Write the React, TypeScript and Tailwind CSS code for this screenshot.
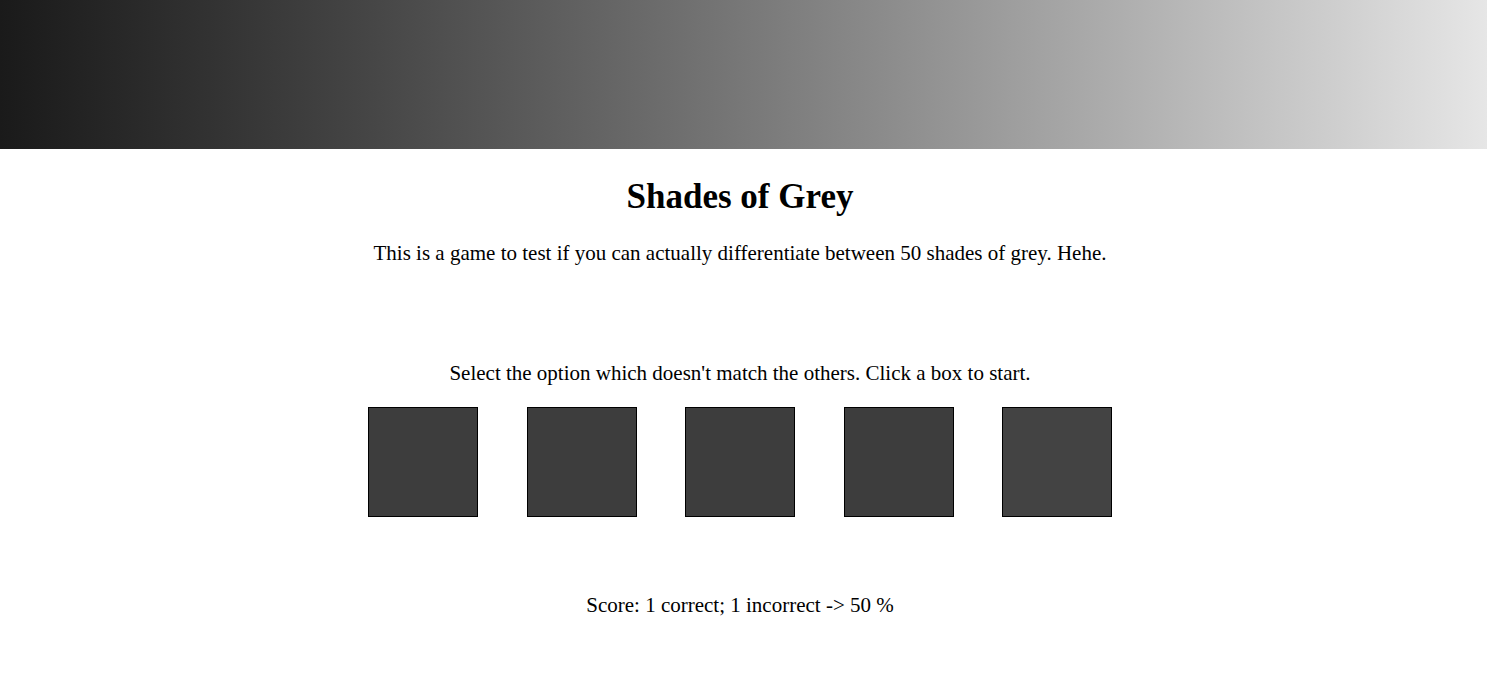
const shades = ["#3d3d3d", "#3d3d3d", "#3d3d3d", "#3d3d3d", "#434343"]

const App = () => {
    return (
        <div className="min-h-screen bg-white text-black" style={{ fontFamily: '"Liberation Serif", "Times New Roman", serif' }}>
            <header className="h-[149px] w-full bg-gradient-to-r from-[#1a1a1a] to-[#e6e6e6]" />

            <main className="flex flex-col items-center pr-[7px]">
                <h1 className="mt-[28px] text-[35px] font-bold leading-[normal]">Shades of Grey</h1>
                <p className="mt-[24px] text-[21px] leading-[normal]">
                    This is a game to test if you can actually differentiate between 50 shades of grey. Hehe.
                </p>

                <p className="mt-[95px] text-[21px] leading-[normal]">
                    Select the option which doesn't match the others. Click a box to start.
                </p>

                <div className="mt-[21px] flex gap-[48.5px]">
                    {shades.map((c, i) => (
                        <button
                            key={i}
                            className="h-[110px] w-[110px] border border-black"
                            style={{ backgroundColor: c }}
                        />
                    ))}
                </div>

                <p className="mt-[76px] text-[21px] leading-[normal]">
                    Score: 1 correct; 1 incorrect -&gt; 50 %
                </p>
            </main>
        </div>
    )
}

export default App
